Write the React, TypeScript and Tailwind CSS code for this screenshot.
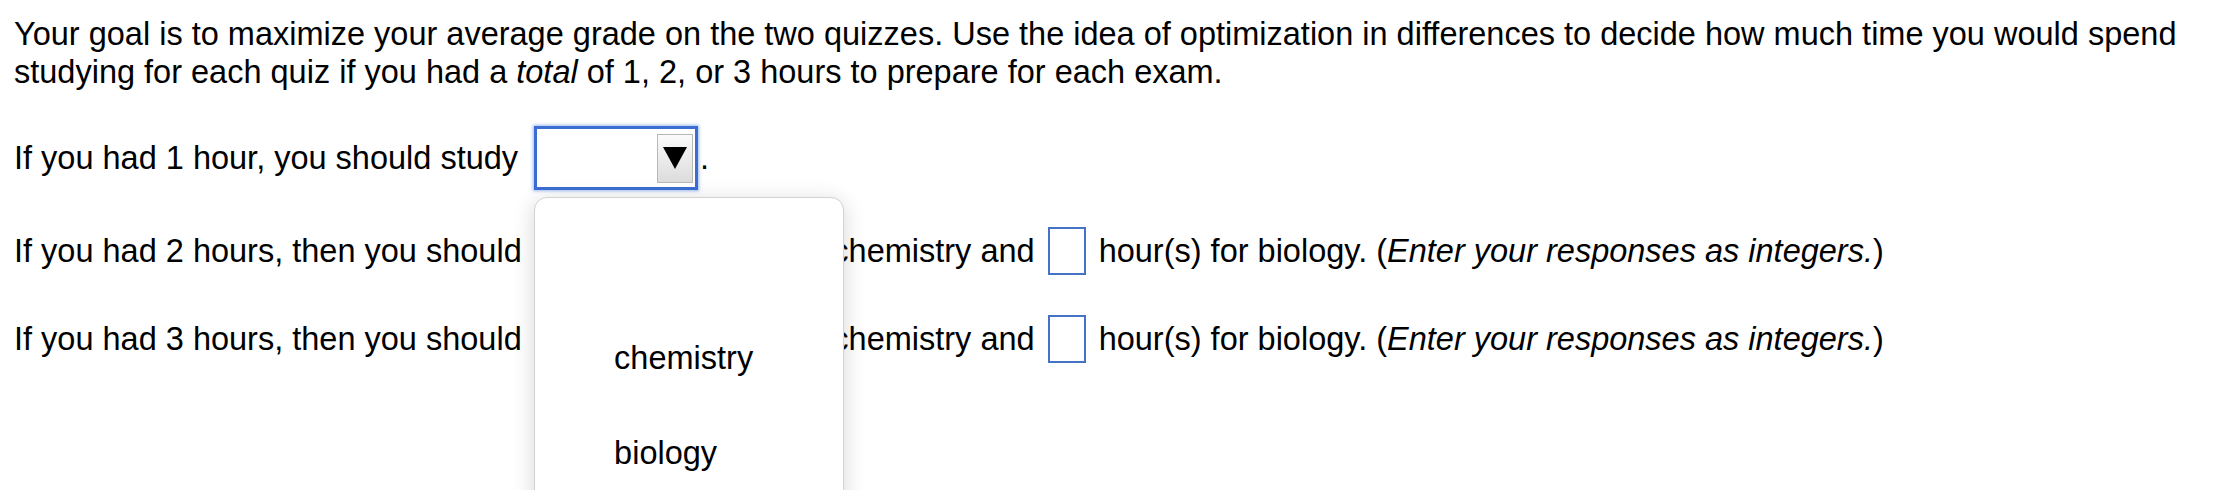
import React from 'react';

function HourBox({ className = '' }: { className?: string }) {
  return <span className={`block w-[38px] h-[48px] shrink-0 border-2 border-[#4472c4] bg-white ${className}`} />;
}

function Row({ hours }: { hours: number }) {
  return (
    <div className="flex items-center h-[48px] whitespace-pre">
      <span>If you had {hours} hours, then you should</span>
      {/* covered by the open dropdown */}
      <span className="ml-[22px]">study</span>
      <HourBox className="ml-[13px]" />
      <span className="ml-[9px]">hour(s) for</span>
      <span className="ml-[1px]">chemistry and</span>
      <HourBox className="ml-[13px]" />
      <span className="ml-[13px]">
        hour(s) for biology. (<i>Enter your responses as integers.</i>)
      </span>
    </div>
  );
}

function SubjectSelect() {
  const options = ['', 'chemistry', 'biology'];
  return (
    <div className="relative ml-[16px]">
      <div className="flex items-center justify-end w-[164px] h-[64px] pr-[2px] border-[3px] border-[#3b6dd3] bg-white shadow-[0_0_3px_1px_rgba(80,130,230,0.55)]">
        <div className="flex items-center justify-center w-[36px] h-[49px] border border-[#b8b8b8] bg-gradient-to-b from-[#fbfbfb] to-[#dcdcdc]">
          <svg width="24" height="22" viewBox="0 0 24 22">
            <polygon points="0,0 24,0 12,22" fill="#000" />
          </svg>
        </div>
      </div>

      {/* open option list */}
      <div className="absolute left-0 top-[71px] z-10 w-[310px] h-[340px] pt-[17px] rounded-[13px] border border-[#d2d2d2] bg-white shadow-[0_4px_22px_rgba(0,0,0,0.16)]">
        {options.map((opt, i) => (
          <div key={i} className="flex items-center h-[95px] pl-[79px]">
            {opt}
          </div>
        ))}
      </div>
    </div>
  );
}

export default function App() {
  return (
    <div
      className="relative h-[490px] overflow-hidden bg-white text-black pl-[14px] pt-[15px] text-[32.5px] leading-[38px]"
      style={{ fontFamily: '"Liberation Sans", Arial, Helvetica, sans-serif' }}
    >
      <p>
        Your goal is to maximize your average grade on the two quizzes. Use the idea of optimization in differences to
        decide how much time you would spend studying for each quiz if you had a <i>total</i> of 1, 2, or 3 hours to
        prepare for each exam.
      </p>

      <div className="flex items-center h-[64px] mt-[35px] whitespace-pre">
        <span>If you had 1 hour, you should study</span>
        <SubjectSelect />
        <span className="ml-[2px]">.</span>
      </div>

      <div className="mt-[37px]">
        <Row hours={2} />
      </div>
      <div className="mt-[40px]">
        <Row hours={3} />
      </div>
    </div>
  );
}
